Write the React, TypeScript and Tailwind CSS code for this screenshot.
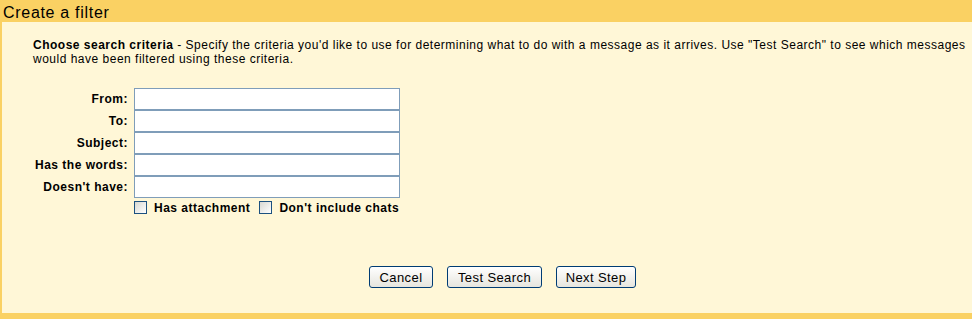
import React from "react";

const fields = ["From:", "To:", "Subject:", "Has the words:", "Doesn't have:"];

function Checkbox({ label }: { label: string }) {
    return (
        <label className="flex items-center">
            <span className="w-[13px] h-[13px] border border-[#1c5180] bg-gradient-to-br from-[#d8d8d2] to-white" />
            <span className="ml-[7px] font-bold">{label}</span>
        </label>
    );
}

function Button({ children, width }: { children: React.ReactNode; width: string }) {
    return (
        <button
            className={`${width} h-[22px] rounded-[3px] border border-[#003c74] bg-gradient-to-b from-white to-[#e6e5de] text-[13px] tracking-[0.4px] text-black leading-none`}
        >
            {children}
        </button>
    );
}

export default function App() {
    return (
        <div className="w-[972px] h-[319px] overflow-hidden bg-[#fad163] font-['Liberation_Sans',Arial,sans-serif] text-[12px] tracking-[0.5px] text-black">
            {/* Header */}
            <div className="h-[22px] pl-[3px] pt-[3px] text-[16px] tracking-[0.7px] leading-[19px]">Create a filter</div>

            {/* Body */}
            <div className="ml-[2px] h-[291px] bg-[#fff7d7] pl-[31px] pt-[16px]">
                <p className="leading-[14px] whitespace-nowrap">
                    <b>Choose search criteria</b> - Specify the criteria you'd like to use for determining what to do with a message as it arrives. Use "Test Search" to see which messages
                    <br />
                    would have been filtered using these criteria.
                </p>

                <div className="mt-[22px] flex flex-col">
                    {fields.map((f) => (
                        <div key={f} className="flex items-center h-[22px]">
                            <div className="w-[95px] text-right font-bold">{f}</div>
                            <input className="ml-[6px] w-[266px] h-[22px] border border-[#7f9db9] bg-white outline-none" />
                        </div>
                    ))}
                    <div className="flex items-center gap-[9px] ml-[101px] mt-[3px] h-[13px]">
                        <Checkbox label="Has attachment" />
                        <Checkbox label="Don't include chats" />
                    </div>
                </div>

                <div className="mt-[52px] flex justify-center gap-[14px]">
                    <Button width="w-[64px]">Cancel</Button>
                    <Button width="w-[95px]">Test Search</Button>
                    <Button width="w-[80px]">Next Step</Button>
                </div>
            </div>
        </div>
    );
}
